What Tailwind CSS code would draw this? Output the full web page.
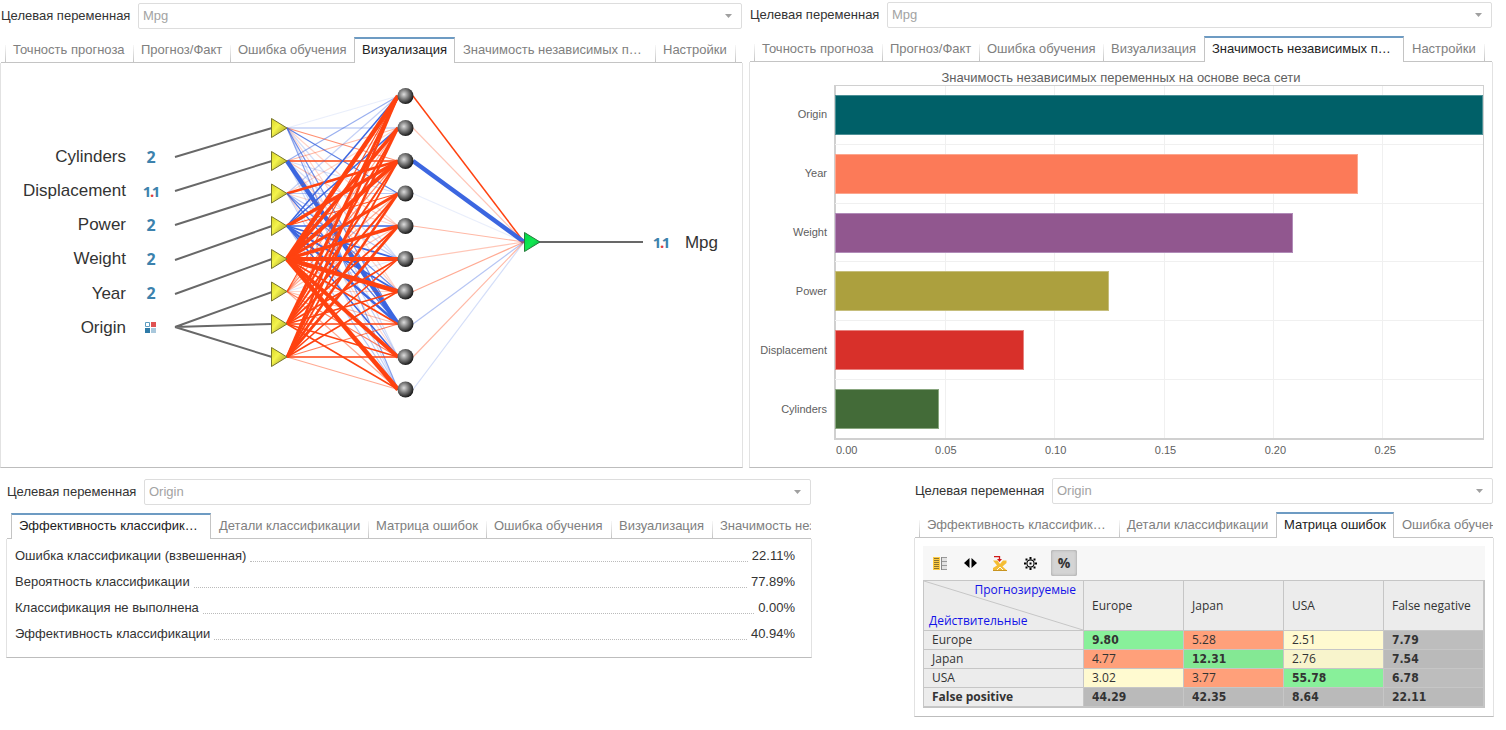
<!DOCTYPE html>
<html lang="ru">
<head>
<meta charset="utf-8">
<meta name="viewport" content="width=device-width, initial-scale=1">
<title>Отчёт по нейросети</title>
<script src="https://cdn.jsdelivr.net/npm/@tailwindcss/browser@4"></script>
</head>
<body class="bg-white font-['Liberation_Sans',Arial,sans-serif] text-[13px] leading-4 text-[#333]">
<main>
  <div class="grid grid-cols-2 gap-x-[7px] pr-[13px]">

    <!-- Network diagram -->
    <section class="flex min-w-0 flex-col pt-[3px]">
      <div class="flex h-[26px] items-center pr-px pl-px">
        <label for="target1" class="w-[137px] shrink-0">Целевая переменная</label>
        <div class="relative flex-1">
          <select id="target1" class="block h-[26px] w-full appearance-none rounded-xs border border-[#ddd] bg-white px-1 text-[#a3a3a3]"><option>Mpg</option></select>
          <svg class="pointer-events-none absolute top-[11px] right-[10px] h-1 w-[7px]" viewBox="0 0 7 4"><path d="M0 0h7L3.500 4z" fill="#a0a0a0"/></svg>
        </div>
      </div>
      <div role="tablist" class="mt-2 flex h-[26px] overflow-hidden pl-px text-[#808080]">
        <span class="w-1 border-b border-[#c4c4c4]"></span>
        <button role="tab" class="w-32 shrink-0 truncate border-b border-[#c4c4c4] bg-[linear-gradient(to_top,#c4c4c4,#f8f8f8)] bg-[length:1px_17px] bg-[position:left_bottom] bg-no-repeat pl-2 text-left">Точность прогноза</button>
        <button role="tab" class="w-[97px] shrink-0 truncate border-b border-[#c4c4c4] bg-[linear-gradient(to_top,#c4c4c4,#f8f8f8)] bg-[length:1px_17px] bg-[position:left_bottom] bg-no-repeat pl-2 text-left">Прогноз/Факт</button>
        <button role="tab" class="w-31 shrink-0 truncate border-b border-[#c4c4c4] bg-[linear-gradient(to_top,#c4c4c4,#f8f8f8)] bg-[length:1px_17px] bg-[position:left_bottom] bg-no-repeat pl-2 text-left">Ошибка обучения</button>
        <button role="tab" aria-selected="true" class="w-[101px] shrink-0 truncate border-x border-t-2 border-x-[#c4c4c4] border-t-[#6d9bc3] pb-[3px] pl-[7px] text-left text-[#222]">Визуализация</button>
        <button role="tab" class="w-[200px] shrink-0 truncate border-b border-[#c4c4c4] px-2 text-left">Значимость независимых п…</button>
        <button role="tab" class="w-20 shrink-0 truncate border-b border-[#c4c4c4] bg-[linear-gradient(to_top,#c4c4c4,#f8f8f8)] bg-[length:1px_17px] bg-[position:left_bottom] bg-no-repeat pl-2 text-left">Настройки</button>
        <span class="mr-px flex-1 border-b border-[#c4c4c4] bg-[linear-gradient(to_top,#c4c4c4,#f8f8f8)] bg-[length:1px_17px] bg-[position:left_bottom] bg-no-repeat"></span>
      </div>
      <div class="flex-1 border-x border-b border-x-[#e2e2e2] border-b-[#bdbdbd]">
        <svg id="net" class="block w-full" viewBox="1 63 741 404" role="img" aria-label="Нейронная сеть">
          <defs>
            <radialGradient id="ball" cx=".4" cy=".4" r=".62"><stop offset="0" stop-color="#ddd"/><stop offset=".5" stop-color="#777"/><stop offset="1" stop-color="#161616"/></radialGradient>
            <linearGradient id="yel" x2="1" y2="1"><stop offset="0" stop-color="#d8d428"/><stop offset=".4" stop-color="#f4f44c"/><stop offset="1" stop-color="#98901c"/></linearGradient>
            <linearGradient id="grn" x2="1" y2="1"><stop offset="0" stop-color="#00d848"/><stop offset=".5" stop-color="#10e850"/><stop offset="1" stop-color="#10a040"/></linearGradient>
            <g id="cat"><path d="M.5.500h4v4H.5z" fill="#fff" stroke="#5d9cc0"/><path d="M6 0h5v5H6z" fill="#e05252"/><path d="M0 6h5v5H0z" fill="#2f7ba8"/><path d="M6 6h5v5H6z" fill="#a9c8dc"/></g>
          </defs>
          <g stroke="#686868" stroke-width="2">
            <path d="M175 157L272 128M175 191L272 161M175 225L272 194M175 260L272 226M175 294L272 259M175 327L272 292M175 327L272 324M175 327L272 357M538 242H643" fill="none"/>
          </g>
          <g id="links"></g>
          <g id="nodes"></g>
          <path d="M524.500 232.500v19l15.500-9.500z" fill="url(#grn)" stroke="#287a3c"/>
          <g font-family="'Liberation Sans',sans-serif" font-size="17" fill="#333" text-anchor="end">
            <text x="126" y="162">Cylinders</text><text x="126" y="196">Displacement</text><text x="126" y="230">Power</text>
            <text x="126" y="264">Weight</text><text x="126" y="299">Year</text><text x="126" y="333">Origin</text>
            <text x="718" y="248">Mpg</text>
          </g>
          <g font-family="'Noto Sans',sans-serif" font-weight="bold" font-size="16" fill="#3c82ad" text-anchor="middle">
            <text x="151" y="163">2</text><text x="151" y="231">2</text><text x="151" y="265">2</text><text x="151" y="299">2</text>
          </g>
          <g font-family="'Noto Sans',sans-serif" font-weight="bold" font-size="15" fill="#3c82ad" text-anchor="middle">
            <text x="147" y="197">1</text><text x="156" y="197">1</text><text x="152" y="197" fill="#e03c3c">.</text>
            <text x="657" y="248">1</text><text x="666" y="248">1</text><text x="662" y="248" fill="#e03c3c">.</text>
          </g>
          <use href="#cat" x="145" y="322"/>
        </svg>
      </div>
    </section>

    <!-- Variable significance -->
    <section class="flex min-w-0 flex-col pt-[2px]">
      <div class="flex h-[26px] items-center pr-px">
        <label for="target2" class="w-[137px] shrink-0">Целевая переменная</label>
        <div class="relative flex-1">
          <select id="target2" class="block h-[26px] w-full appearance-none rounded-xs border border-[#ddd] bg-white px-1 text-[#a3a3a3]"><option>Mpg</option></select>
          <svg class="pointer-events-none absolute top-[11px] right-[10px] h-1 w-[7px]" viewBox="0 0 7 4"><path d="M0 0h7L3.500 4z" fill="#a0a0a0"/></svg>
        </div>
      </div>
      <div role="tablist" class="mt-2 flex h-[26px] overflow-hidden text-[#808080]">
        <span class="w-1 border-b border-[#c4c4c4]"></span>
        <button role="tab" class="w-32 shrink-0 truncate border-b border-[#c4c4c4] bg-[linear-gradient(to_top,#c4c4c4,#f8f8f8)] bg-[length:1px_17px] bg-[position:left_bottom] bg-no-repeat pl-2 text-left">Точность прогноза</button>
        <button role="tab" class="w-[97px] shrink-0 truncate border-b border-[#c4c4c4] bg-[linear-gradient(to_top,#c4c4c4,#f8f8f8)] bg-[length:1px_17px] bg-[position:left_bottom] bg-no-repeat pl-2 text-left">Прогноз/Факт</button>
        <button role="tab" class="w-31 shrink-0 truncate border-b border-[#c4c4c4] bg-[linear-gradient(to_top,#c4c4c4,#f8f8f8)] bg-[length:1px_17px] bg-[position:left_bottom] bg-no-repeat pl-2 text-left">Ошибка обучения</button>
        <button role="tab" class="w-[101px] shrink-0 truncate border-b border-[#c4c4c4] bg-[linear-gradient(to_top,#c4c4c4,#f8f8f8)] bg-[length:1px_17px] bg-[position:left_bottom] bg-no-repeat pl-2 text-left">Визуализация</button>
        <button role="tab" aria-selected="true" class="w-[200px] shrink-0 truncate border-x border-t-2 border-x-[#c4c4c4] border-t-[#6d9bc3] px-[7px] pb-[3px] text-left text-[#222]">Значимость независимых п…</button>
        <button role="tab" class="w-20 shrink-0 truncate border-b border-[#c4c4c4] pl-2 text-left">Настройки</button>
        <span class="mr-px flex-1 border-b border-[#c4c4c4] bg-[linear-gradient(to_top,#c4c4c4,#f8f8f8)] bg-[length:1px_17px] bg-[position:left_bottom] bg-no-repeat"></span>
      </div>
      <div class="-ml-px flex flex-1 flex-col border-x border-b border-x-[#e2e2e2] border-b-[#bdbdbd] pt-2 pr-2 pb-[7px]">
        <h2 class="h-[15px] pl-2 text-center text-[#606060]">Значимость независимых переменных на основе веса сети</h2>
        <div class="flex flex-1 text-[11px] text-[#606060]">
          <div class="flex w-[84px] flex-col pb-[22px] text-right">
            <div class="flex flex-1 items-center justify-end pr-[7px]">Origin</div>
            <div class="flex flex-1 items-center justify-end pr-[7px]">Year</div>
            <div class="flex flex-1 items-center justify-end pr-[7px]">Weight</div>
            <div class="flex flex-1 items-center justify-end pr-[7px]">Power</div>
            <div class="flex flex-1 items-center justify-end pr-[7px]">Displacement</div>
            <div class="flex flex-1 items-center justify-end pr-[7px]">Cylinders</div>
          </div>
          <div class="flex flex-1 flex-col">
            <div class="relative flex flex-1 flex-col border-t border-r border-b-2 border-l-2 border-[#d0d0d0]">
              <div class="absolute inset-y-0 w-px bg-[#f0f0f0]" style="left:16.900%"></div>
              <div class="absolute inset-y-0 w-px bg-[#f0f0f0]" style="left:33.700%"></div>
              <div class="absolute inset-y-0 w-px bg-[#f0f0f0]" style="left:50.700%"></div>
              <div class="absolute inset-y-0 w-px bg-[#f0f0f0]" style="left:67.600%"></div>
              <div class="absolute inset-y-0 w-px bg-[#f0f0f0]" style="left:84.400%"></div>
              <div class="-ml-px flex flex-1 items-center border-b border-[#f0f0f0]"><div class="relative h-10 border border-[#4d9096] bg-[#006068]" style="width:100%"></div></div>
              <div class="-ml-px flex flex-1 items-center border-b border-[#f0f0f0]"><div class="relative h-10 border border-[#fca68e] bg-[#fc7a58]" style="width:80.700%"></div></div>
              <div class="-ml-px flex flex-1 items-center border-b border-[#f0f0f0]"><div class="relative h-10 border border-[#b18bb8] bg-[#91578f]" style="width:70.700%"></div></div>
              <div class="-ml-px flex flex-1 items-center border-b border-[#f0f0f0]"><div class="relative h-10 border border-[#c6be7c] bg-[#aca03e]" style="width:42.300%"></div></div>
              <div class="-ml-px flex flex-1 items-center border-b border-[#f0f0f0]"><div class="relative h-10 border border-[#e8827e] bg-[#d8302a]" style="width:29.100%"></div></div>
              <div class="-ml-px flex flex-1 items-center"><div class="relative h-10 border border-[#89a67f] bg-[#436b38]" style="width:16%"></div></div>
            </div>
            <div class="relative h-5 pt-[2px] pl-[2px]">
              <span>0.00</span>
              <span class="absolute -translate-x-1/2" style="left:17.200%">0.05</span>
              <span class="absolute -translate-x-1/2" style="left:34.100%">0.10</span>
              <span class="absolute -translate-x-1/2" style="left:51%">0.15</span>
              <span class="absolute -translate-x-1/2" style="left:67.900%">0.20</span>
              <span class="absolute -translate-x-1/2" style="left:84.800%">0.25</span>
            </div>
          </div>
        </div>
      </div>
    </section>
  </div>

  <div class="grid grid-cols-[804fr_578fr] items-start gap-x-[104px] pr-[13px] pl-[7px]">

    <!-- Classification efficiency -->
    <section class="flex min-w-0 flex-col pt-[11px]">
      <div class="flex h-[26px] items-center">
        <label for="target3" class="w-[137px] shrink-0">Целевая переменная</label>
        <div class="relative flex-1">
          <select id="target3" class="block h-[26px] w-full appearance-none rounded-xs border border-[#ddd] bg-white px-1 text-[#a3a3a3]"><option>Origin</option></select>
          <svg class="pointer-events-none absolute top-[11px] right-[10px] h-1 w-[7px]" viewBox="0 0 7 4"><path d="M0 0h7L3.500 4z" fill="#a0a0a0"/></svg>
        </div>
      </div>
      <div role="tablist" class="mt-2 flex h-[26px] overflow-hidden text-[#808080]">
        <span class="w-1 shrink-0 border-b border-[#c4c4c4]"></span>
        <button role="tab" aria-selected="true" class="w-[200px] shrink-0 truncate border-x border-t-2 border-x-[#c4c4c4] border-t-[#6d9bc3] px-[7px] pb-[3px] text-left text-[#222]">Эффективность классифик…</button>
        <button role="tab" class="w-[157px] shrink-0 truncate border-b border-[#c4c4c4] pl-2 text-left">Детали классификации</button>
        <button role="tab" class="w-[118px] shrink-0 truncate border-b border-[#c4c4c4] bg-[linear-gradient(to_top,#c4c4c4,#f8f8f8)] bg-[length:1px_17px] bg-[position:left_bottom] bg-no-repeat pl-2 text-left">Матрица ошибок</button>
        <button role="tab" class="w-[125px] shrink-0 truncate border-b border-[#c4c4c4] bg-[linear-gradient(to_top,#c4c4c4,#f8f8f8)] bg-[length:1px_17px] bg-[position:left_bottom] bg-no-repeat pl-2 text-left">Ошибка обучения</button>
        <button role="tab" class="w-[101px] shrink-0 truncate border-b border-[#c4c4c4] bg-[linear-gradient(to_top,#c4c4c4,#f8f8f8)] bg-[length:1px_17px] bg-[position:left_bottom] bg-no-repeat pl-2 text-left">Визуализация</button>
        <button role="tab" class="w-[200px] shrink-0 truncate border-b border-[#c4c4c4] bg-[linear-gradient(to_top,#c4c4c4,#f8f8f8)] bg-[length:1px_17px] bg-[position:left_bottom] bg-no-repeat px-2 text-left">Значимость независимых п…</button>
      </div>
      <dl class="-mx-px border-x border-b border-x-[#e2e2e2] border-b-[#bdbdbd] px-2 pt-1 pb-[10px]">
        <div class="flex h-[26px] items-center pr-2"><dt>Ошибка классификации (взвешенная)</dt><span class="mx-1 mt-[10px] flex-1 border-b border-dotted border-[#bbb]"></span><dd>22.11%</dd></div>
        <div class="flex h-[26px] items-center pr-2"><dt>Вероятность классификации</dt><span class="mx-1 mt-[10px] flex-1 border-b border-dotted border-[#bbb]"></span><dd>77.89%</dd></div>
        <div class="flex h-[26px] items-center pr-2"><dt>Классификация не выполнена</dt><span class="mx-1 mt-[10px] flex-1 border-b border-dotted border-[#bbb]"></span><dd>0.00%</dd></div>
        <div class="flex h-[26px] items-center pr-2"><dt>Эффективность классификации</dt><span class="mx-1 mt-[10px] flex-1 border-b border-dotted border-[#bbb]"></span><dd>40.94%</dd></div>
      </dl>
    </section>

    <!-- Confusion matrix -->
    <section class="flex min-w-0 flex-col pt-[10px]">
      <div class="flex h-[26px] items-center">
        <label for="target4" class="w-[137px] shrink-0">Целевая переменная</label>
        <div class="relative flex-1">
          <select id="target4" class="block h-[26px] w-full appearance-none rounded-xs border border-[#ddd] bg-white px-1 text-[#a3a3a3]"><option>Origin</option></select>
          <svg class="pointer-events-none absolute top-[11px] right-[10px] h-1 w-[7px]" viewBox="0 0 7 4"><path d="M0 0h7L3.500 4z" fill="#a0a0a0"/></svg>
        </div>
      </div>
      <div role="tablist" class="mt-2 flex h-[26px] overflow-hidden text-[#808080]">
        <span class="w-1 shrink-0 border-b border-[#c4c4c4]"></span>
        <button role="tab" class="w-[200px] shrink-0 truncate border-b border-[#c4c4c4] bg-[linear-gradient(to_top,#c4c4c4,#f8f8f8)] bg-[length:1px_17px] bg-[position:left_bottom] bg-no-repeat px-2 text-left">Эффективность классифик…</button>
        <button role="tab" class="w-[157px] shrink-0 truncate border-b border-[#c4c4c4] bg-[linear-gradient(to_top,#c4c4c4,#f8f8f8)] bg-[length:1px_17px] bg-[position:left_bottom] bg-no-repeat pl-2 text-left">Детали классификации</button>
        <button role="tab" aria-selected="true" class="w-[118px] shrink-0 truncate border-x border-t-2 border-x-[#c4c4c4] border-t-[#6d9bc3] pb-[3px] pl-[7px] text-left text-[#222]">Матрица ошибок</button>
        <button role="tab" class="w-[125px] shrink-0 truncate border-b border-[#c4c4c4] pl-2 text-left">Ошибка обучения</button>
      </div>
      <div class="-mx-px border-x border-b border-x-[#e2e2e2] border-b-[#bdbdbd] p-2">
        <div class="flex h-[34px] items-center bg-[#f7f7f7] pl-1">
          <button aria-label="Столбцы" class="mr-1 flex size-[26px] items-center justify-center"><svg class="h-[13px] w-[14px]" viewBox="0 0 14 13"><path d="M0 0h7v13H0z" fill="#ffcb42"/><path d="M1 1.500h5M1 3.500h5M1 5.500h5M1 7.500h5M1 9.500h5M1 11.500h5" stroke="#8a7330"/><path d="M8 0h6v13H8z" fill="#e2e2e2"/><path d="M8 0h1v13H8z" fill="#888"/><path d="M9 .5h5M9 4.500h5M9 8.500h5M9 12.500h5" stroke="#999"/></svg></button>
          <button aria-label="По ширине" class="mr-1 flex size-[26px] items-center justify-center"><svg class="h-[10px] w-[13px]" viewBox="0 0 13 10"><path d="M5.500 0v10L0 5zM7.500 0v10L13 5z" fill="#000"/></svg></button>
          <button aria-label="Экспорт в Excel" class="mr-1 flex size-[26px] items-center justify-center"><svg class="h-[15px] w-[14px]" viewBox="0 0 14 15"><path d="M0 4.500h4.500L7 8l3-3.500h3.500V7L9.500 10.500l4.500 4H0V12l4-2.500z" fill="#f4bd34"/><path d="M4 14l3-3 3 3" fill="none" stroke="#f7f7f7"/><path d="M0 14.500h14" stroke="#c89420"/><path d="M1 .5h5.500V4" fill="none" stroke="#d01818" stroke-width="1.300"/><path d="M4 3h5L6.500 6z" fill="#d01818"/></svg></button>
          <button aria-label="Настройка" class="mr-2 flex size-[26px] items-center justify-center"><svg class="size-[13px]" viewBox="0 0 13 13"><circle cx="6.500" cy="6.500" r="3.600" fill="none" stroke="#000" stroke-width="1.200"/><path d="M5.500 5.500h2v2h-2zM5.500 0h2v2h-2zM5.500 11h2v2h-2zM0 5.500h2v2H0zM11 5.500h2v2h-2zM1.500 1.500h2v2h-2zM9.500 1.500h2v2h-2zM1.500 9.500h2v2h-2zM9.500 9.500h2v2h-2z"/></svg></button>
          <button aria-pressed="true" class="size-[26px] rounded-xs bg-[#d4d4d4] font-['Open_Sans',sans-serif] text-sm font-bold inset-shadow-[0_0_3px_#999]">%</button>
        </div>
        <table class="w-full table-fixed border-separate border-spacing-px border-r border-b border-[#c4c4c4] bg-[#c6c6c6] text-left font-['Open_Sans',sans-serif] text-xs leading-[18px]">
          <colgroup><col class="w-[159px]"><col><col><col><col></colgroup>
          <thead>
            <tr class="h-[49px] bg-[#ececec]">
              <th class="relative p-0 font-normal text-[#1212e8]">
                <svg class="absolute inset-0 size-full" viewBox="0 0 159 49" preserveAspectRatio="none"><path d="M0 0L159 49" stroke="#c6c6c6"/></svg>
                <div class="relative flex h-[49px] flex-col justify-between pr-[7px] pl-[5px]"><span class="text-right">Прогнозируемые</span><span>Действительные</span></div>
              </th>
              <th class="p-0 pl-2 font-normal">Europe</th><th class="p-0 pl-2 font-normal">Japan</th><th class="p-0 pl-2 font-normal">USA</th><th class="p-0 pl-2 font-normal">False negative</th>
            </tr>
          </thead>
          <tbody>
            <tr><th class="bg-[#ececec] p-0 pl-2 font-normal">Europe</th><td class="bg-[#88f09a] p-0 pl-2 font-['DejaVu_Sans_Condensed','DejaVu_Sans',sans-serif] font-bold">9.80</td><td class="bg-[#ffa07a] p-0 pl-2">5.28</td><td class="bg-[#fffad0] p-0 pl-2">2.51</td><td class="bg-[#bdbdbd] p-0 pl-2 font-['DejaVu_Sans_Condensed','DejaVu_Sans',sans-serif] font-bold">7.79</td></tr>
            <tr><th class="bg-[#ececec] p-0 pl-2 font-normal">Japan</th><td class="bg-[#ffa07a] p-0 pl-2">4.77</td><td class="bg-[#84e894] p-0 pl-2 font-['DejaVu_Sans_Condensed','DejaVu_Sans',sans-serif] font-bold">12.31</td><td class="bg-[#f8f4cc] p-0 pl-2">2.76</td><td class="bg-[#bababa] p-0 pl-2 font-['DejaVu_Sans_Condensed','DejaVu_Sans',sans-serif] font-bold">7.54</td></tr>
            <tr><th class="bg-[#ececec] p-0 pl-2 font-normal">USA</th><td class="bg-[#fffad0] p-0 pl-2">3.02</td><td class="bg-[#ffa07a] p-0 pl-2">3.77</td><td class="bg-[#88f09a] p-0 pl-2 font-['DejaVu_Sans_Condensed','DejaVu_Sans',sans-serif] font-bold">55.78</td><td class="bg-[#bdbdbd] p-0 pl-2 font-['DejaVu_Sans_Condensed','DejaVu_Sans',sans-serif] font-bold">6.78</td></tr>
            <tr class="font-['DejaVu_Sans_Condensed','DejaVu_Sans',sans-serif] font-bold"><th class="bg-[#ececec] p-0 pl-2 font-['Open_Sans',sans-serif]">False positive</th><td class="bg-[#bababa] p-0 pl-2">44.29</td><td class="bg-[#bababa] p-0 pl-2">42.35</td><td class="bg-[#bababa] p-0 pl-2">8.64</td><td class="bg-[#bababa] p-0 pl-2">22.11</td></tr>
          </tbody>
        </table>
      </div>
    </section>
  </div>
</main>
<script>
  // Link weights, input x hidden: positive is orange, negative is blue.
  const weights = [
    [-.15, -.6, .8, -1.1, .3, -.3, .3, -1, -.3, -.8],
    [-.7, .5, 1.5, -.3, .4, -.3, .3, -4.5, -.4, -.3],
    [-.4, .3, 2.8, -.5, .3, -.5, -1, -1.2, .3, -.4],
    [-1.5, -1.6, 3.5, 1.2, -1.7, -1.8, -2, -2.5, -1.5, -.5],
    [4.5, 3.5, 4, 3, 3.5, 3.8, 4.5, 2, 3.8, 4.5],
    [1.2, .6, .8, .6, .4, -.2, .3, .5, .9, .6],
    [3, 2.2, 2, 2, 1.8, 1.8, 1.6, 1.5, 1.4, 1.5],
    [2.5, 2.5, 1.8, 2.5, 2.8, 1.6, 1.6, .9, 1.4, .6]
  ];
  const output = [1.5, .4, -4.5, -.15, .5, .4, .6, -.5, .5, -.3];
  const inY = [128, 161, 193.5, 226, 259, 291.5, 324, 357];
  const hidY = [96, 128, 161, 193.5, 226, 259, 291.5, 324, 357, 389.5];
  const link = (x1, y1, x2, y2, w) => {
    const s = Math.abs(w);
    return `<line x1="${x1}" y1="${y1}" x2="${x2}" y2="${y2}" stroke="${w > 0 ? '#ff4210' : '#3c66e0'}" stroke-width="${Math.max(1.2, s)}" stroke-opacity="${Math.min(1, s * .75)}"/>`;
  };
  const all = [];
  weights.forEach((row, i) => row.forEach((w, h) => all.push([287, inY[i], 398, hidY[h], w])));
  output.forEach((w, h) => all.push([413, hidY[h], 524, 242, w]));
  document.getElementById('links').innerHTML = all.map(a => link(...a)).join('');
  document.getElementById('nodes').innerHTML =
    inY.map(y => `<path d="M271.500 ${y - 9.5}v19l15.500-9.500z" fill="url(#yel)" stroke="#77752c"/>`).join('') +
    hidY.map(y => `<circle cx="405.500" cy="${y}" r="8" fill="url(#ball)"/>`).join('');
</script>
</body>
</html>
